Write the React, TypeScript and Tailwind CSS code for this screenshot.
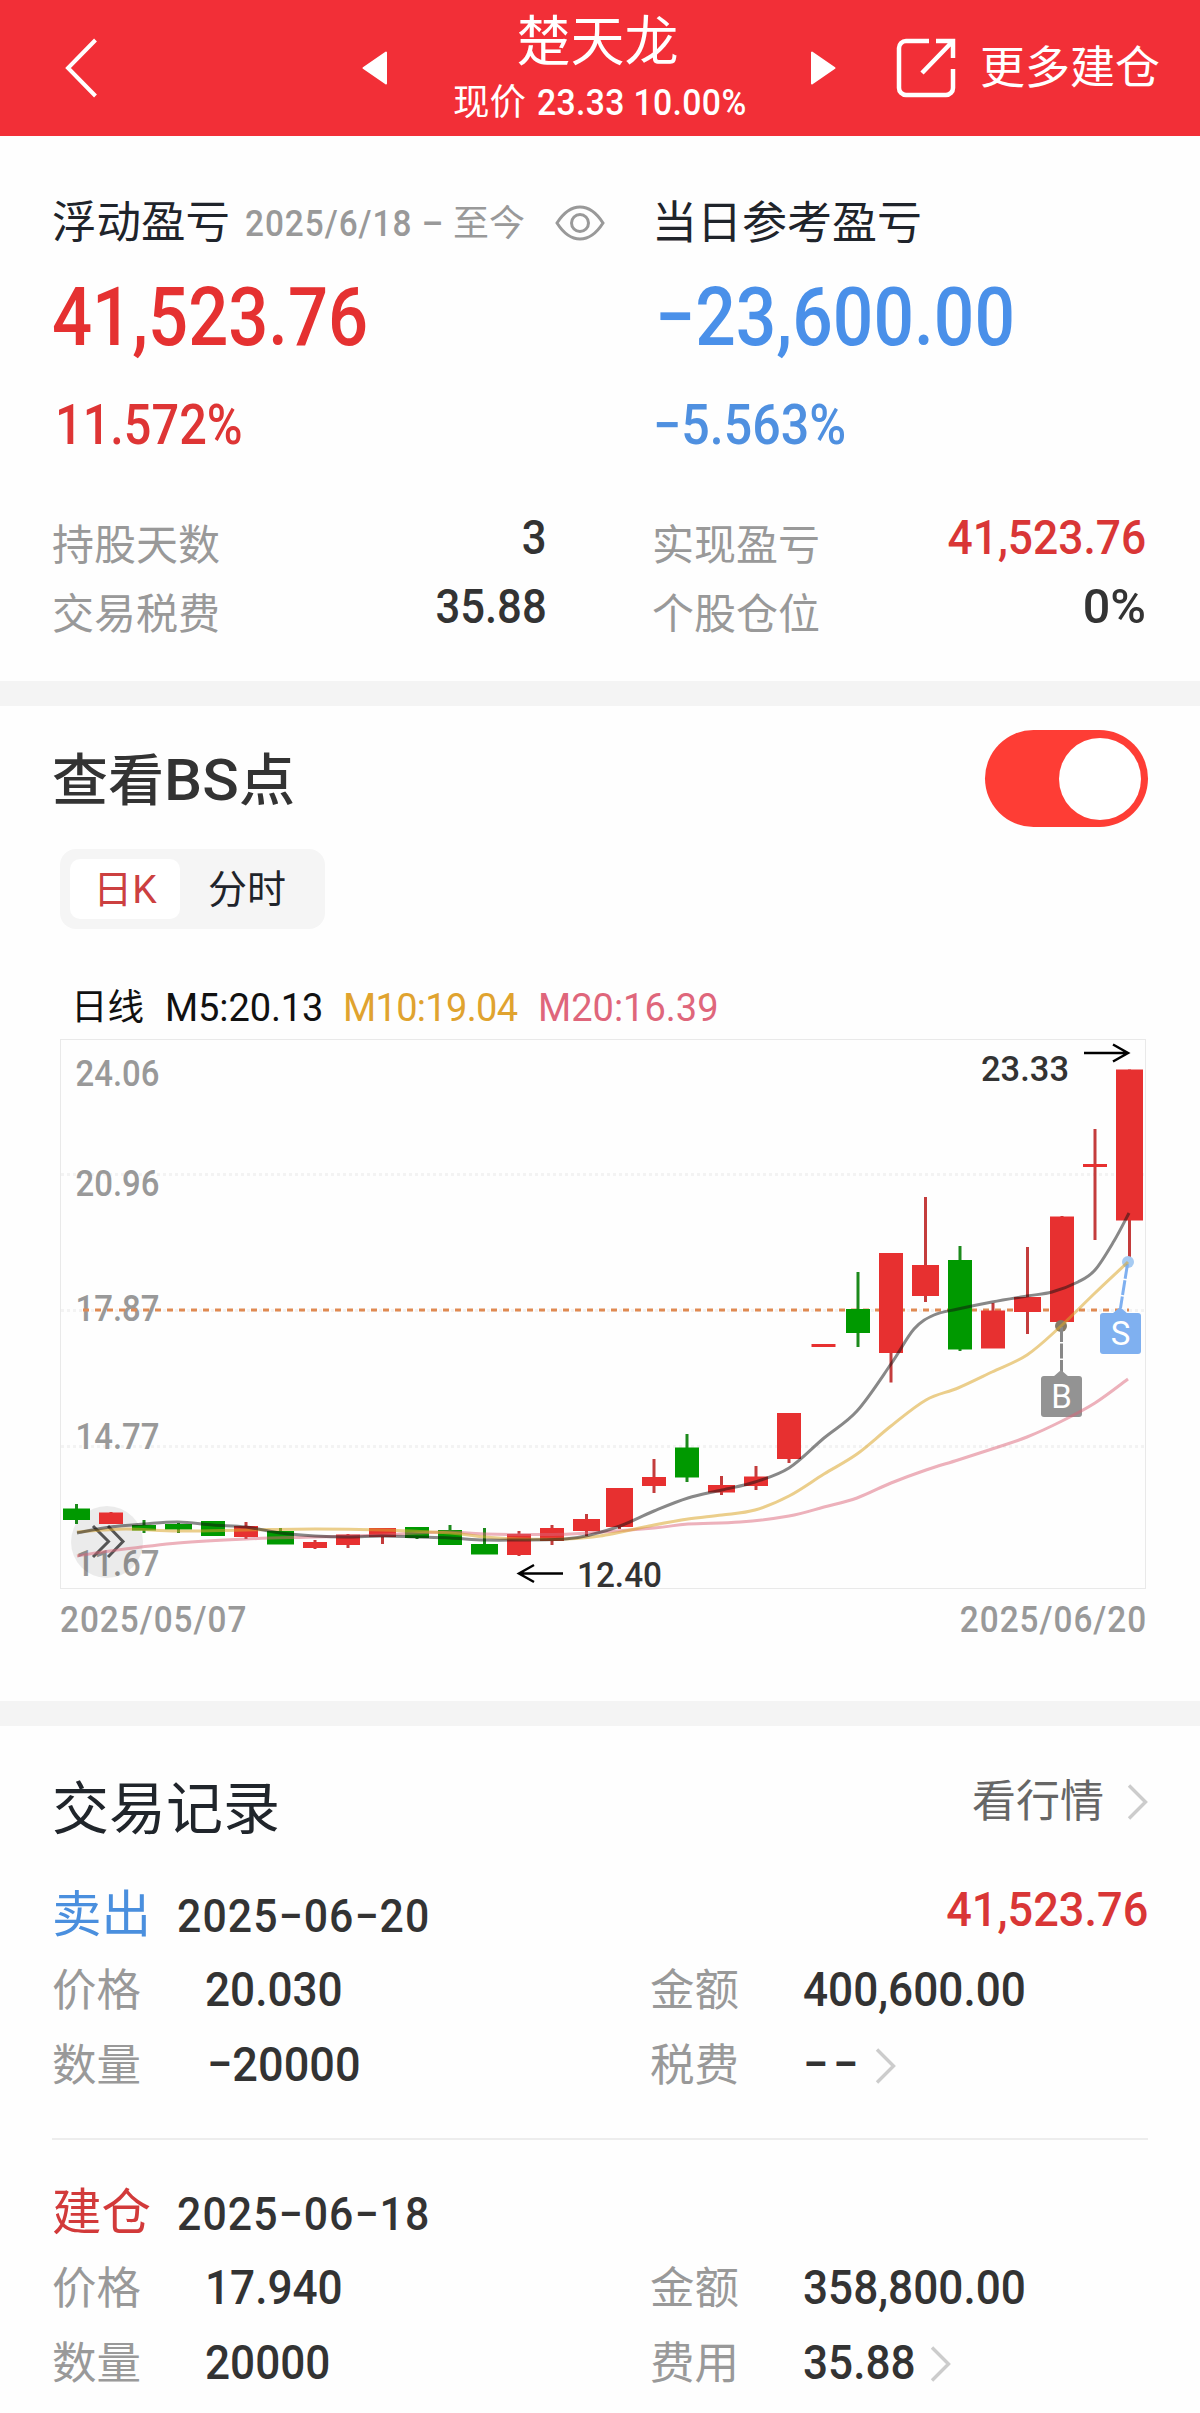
import clsx from "clsx";

const RED = "#e73030";
const GREEN = "#009900";

// left, width, body top, body bottom, high, low, rising
const candles: any[] = [
  [63, 27, 1508.5, 1520, 1504, 1524, false],
  [99, 24, 1512.5, 1524, 1512, 1524, true],
  [132, 24, 1525, 1530.5, 1520, 1533, false],
  [165, 27, 1524, 1529.5, 1523, 1533, false],
  [201, 24, 1521, 1536, 1521, 1536, false],
  [234, 24, 1526, 1537, 1522, 1539, true],
  [267, 27, 1531, 1544.5, 1528, 1544, false],
  [303, 24, 1542, 1548, 1540, 1549, true],
  [336, 24, 1534.5, 1545, 1534, 1548, true],
  [369, 27, 1528, 1537, 1528, 1544, true],
  [405, 24, 1527, 1538, 1527, 1539, false],
  [438, 24, 1530, 1545, 1525, 1545, false],
  [471, 27, 1544, 1554.5, 1528, 1554, false],
  [507, 24, 1534, 1555, 1531, 1556, true],
  [540, 24, 1528, 1541, 1525, 1545, true],
  [573, 27, 1519, 1531, 1514, 1536, true],
  [606, 27, 1488, 1527, 1488, 1529, true],
  [642, 24, 1477, 1486, 1459, 1493, true],
  [675, 24, 1447.5, 1477.5, 1434, 1482, false],
  [708, 27, 1485, 1492.5, 1476, 1495, true],
  [744, 24, 1476.5, 1486, 1466, 1490, true],
  [777, 24, 1413, 1459, 1413, 1463, true],
  [811.5, 24, 1344, 1347, 1344, 1347, true],
  [846, 24, 1309, 1333, 1272, 1347, false],
  [879, 24, 1253, 1353, 1253, 1382.5, true],
  [912, 27, 1265, 1296, 1197, 1302, true],
  [948, 24, 1260, 1349.5, 1246, 1351, false],
  [981, 24, 1310.5, 1348.5, 1303, 1348, true],
  [1014, 27, 1297, 1312, 1247, 1334, true],
  [1050, 24, 1216.5, 1322, 1216, 1326, true],
  [1083, 24, 1164, 1167, 1129, 1240, true],
  [1116, 27, 1069.5, 1220.5, 1069.5, 1260, true],
];

const ma5 = [
  [77, 1533], [110, 1527], [144, 1524], [178, 1522], [213, 1525], [246, 1527], [280, 1533], [315, 1536],
  [348, 1537], [382, 1536], [417, 1537], [450, 1538], [485, 1540], [519, 1540], [565, 1539], [590, 1535],
  [620, 1526], [654, 1511], [688, 1498], [722, 1490], [755, 1482], [789, 1468], [824, 1438], [857, 1411],
  [891, 1364], [914, 1329], [934, 1315], [958, 1309], [992, 1302], [1027, 1296], [1052, 1292], [1078, 1282],
  [1095, 1270], [1114, 1241], [1129, 1213],
];
const ma10 = [
  [77, 1532], [125, 1529], [178, 1531], [246, 1530], [315, 1529], [382, 1530], [450, 1533], [485, 1537],
  [519, 1539], [565, 1539], [600, 1536], [654, 1525], [688, 1519], [722, 1515], [755, 1510], [789, 1496],
  [824, 1474], [857, 1454], [891, 1426], [926, 1400], [958, 1388], [992, 1372], [1027, 1355], [1061, 1326],
  [1095, 1293], [1128, 1262],
];
const ma20 = [
  [77, 1556], [110, 1551], [178, 1543], [246, 1539], [315, 1537], [382, 1535], [417, 1533], [450, 1532],
  [485, 1534], [552, 1534.5], [587, 1533], [654, 1528], [688, 1524], [740, 1522], [789, 1516], [824, 1507],
  [857, 1498], [891, 1483], [926, 1470], [958, 1460], [992, 1449], [1027, 1437], [1062, 1421], [1095, 1403],
  [1128, 1379],
];

const smooth = (pts: number[][]) => {
  let d = `M${pts[0][0]} ${pts[0][1]}`;
  for (let i = 0; i < pts.length - 1; i++) {
    const p0 = pts[i - 1] || pts[i];
    const p1 = pts[i];
    const p2 = pts[i + 1];
    const p3 = pts[i + 2] || p2;
    d += `C${p1[0] + (p2[0] - p0[0]) / 6} ${p1[1] + (p2[1] - p0[1]) / 6} ${p2[0] - (p3[0] - p1[0]) / 6} ${
      p2[1] - (p3[1] - p1[1]) / 6
    } ${p2[0]} ${p2[1]}`;
  }
  return d;
};

const Num = ({ children, className }: any) => (
  <span className={clsx("inline-block whitespace-nowrap font-medium", className)}>{children}</span>
);

const Chevron = ({ className }: any) => (
  <svg viewBox="0 0 21 36" fill="none" className={clsx("h-9 w-[21px] shrink-0", className)}>
    <path d="M2 1.5 18.5 18 2 34.5" stroke="#cccccc" strokeWidth="3.4" />
  </svg>
);

const Header = () => (
  <header className="flex h-[136px] items-center bg-[#f22f37] text-white">
    <svg viewBox="0 0 32 60" fill="none" className="ml-[65px] h-[60px] w-8">
      <path d="M30.5 2 3 30l27.5 28" stroke="#fff" strokeWidth="4" />
    </svg>
    <svg viewBox="0 0 26 34" className="ml-[265px] h-[34px] w-[26px]">
      <path d="M24 1.5v31L1.5 17z" fill="#fff" stroke="#fff" strokeWidth="2" strokeLinejoin="round" />
    </svg>
    <div className="flex w-[422px] flex-col items-center">
      <h1 className="-ml-[3px] h-[70px] text-[54px] leading-[70px]">楚天龙</h1>
      <div className="flex h-[50px] items-center text-[36.5px] leading-[50px]">
        <span>现价</span>
        <Num className="ml-[11px] w-[208px] origin-left scale-x-[.925] tracking-[.01em]">23.33 10.00%</Num>
      </div>
    </div>
    <svg viewBox="0 0 26 34" className="h-[34px] w-[26px]">
      <path d="M2 1.5v31L24.5 17z" fill="#fff" stroke="#fff" strokeWidth="2" strokeLinejoin="round" />
    </svg>
    <svg viewBox="0 0 60 60" fill="none" className="ml-[60px] h-[60px] w-[60px]">
      <path d="M33 3H10a7 7 0 0 0-7 7v40a7 7 0 0 0 7 7h40a7 7 0 0 0 7-7V31" stroke="#fff" strokeWidth="4.5" />
      <path d="M40 3h17v17M57 3 26 35" stroke="#fff" strokeWidth="4.5" />
    </svg>
    <span className="mt-[2px] ml-[24px] whitespace-nowrap text-[45px] leading-[60px]">更多建仓</span>
  </header>
);

const Stat = ({ label, value, className }: any) => (
  <div className="flex h-[69.5px] items-center justify-between">
    <span className="text-[42px] text-[#999]">{label}</span>
    <Num className={clsx("origin-right pb-4 text-[48.5px]", className)}>{value}</Num>
  </div>
);

const Summary = () => (
  <section className="flex h-[545px] gap-[105px] pt-[57px] pl-[52px]">
    <div className="w-[495px]">
      <div className="flex h-[60px] items-center whitespace-nowrap">
        <span className="w-[193px] shrink-0 text-[44.5px] text-[#1f242b]">浮动盈亏</span>
        <span className="w-[284px] shrink-0 text-[37px] text-[#999]">
          <Num className="w-[208px] origin-left scale-x-[.9] tracking-[.03em]">2025/6/18 –</Num>
          <span className="text-[36px]">至今</span>
        </span>
        <svg viewBox="0 0 50 36" fill="none" className="ml-[26px] h-9 w-[50px] shrink-0">
          <path d="M2 18C9 7 16 2 25 2s16 5 23 16c-7 11-14 16-23 16S9 29 2 18z" stroke="#999" strokeWidth="3" />
          <circle cx="25" cy="18" r="8.5" stroke="#999" strokeWidth="3" />
        </svg>
      </div>
      <div className="flex h-[126px] items-center pt-1 text-[81.5px] text-[#e53131]">
        <Num className="origin-left scale-x-[.866]">41,523.76</Num>
      </div>
      <div className="mb-10 flex h-[92px] items-center pl-[3px] text-[55px] text-[#de3535]">
        <Num className="origin-left scale-x-[.885]">11.572%</Num>
      </div>
      <Stat label="持股天数" value="3" className="scale-x-[.9] text-[#333]" />
      <Stat label="交易税费" value="35.88" className="scale-x-[.9] text-[#333]" />
    </div>
    <div className="w-[494px]">
      <div className="flex h-[60px] items-center whitespace-nowrap text-[45px] text-[#1f242b]">当日参考盈亏</div>
      <div className="flex h-[126px] items-center pt-1 pl-[3px] text-[81.5px] text-[#4a90e9]">
        <Num className="origin-left scale-x-[.876]">−23,600.00</Num>
      </div>
      <div className="mb-10 flex h-[92px] items-center pl-px text-[55px] text-[#4f90e0]">
        <Num className="origin-left scale-x-[.912]">−5.563%</Num>
      </div>
      <Stat label="实现盈亏" value="41,523.76" className="scale-x-[.915] text-[#d93636]" />
      <Stat label="个股仓位" value="0%" className="text-[#333]" />
    </div>
  </section>
);

const axis: any[] = [
  ["24.06", 1086],
  ["20.96", 1196],
  ["17.87", 1321],
  ["14.77", 1449],
  ["11.67", 1576],
];

const KChart = () => (
  <svg viewBox="60 1039 1086 550" className="mt-px ml-2 block h-[550px] w-[1086px] overflow-visible" fill="none">
    <rect x="60.5" y="1039.5" width="1085" height="549" stroke="#e9e9e9" />
    {[1174.5, 1310.5, 1446.5].map((y) => (
      <path key={y} d={`M61 ${y}H1145`} stroke="#f3f3f3" strokeWidth="3" strokeDasharray="3 3" />
    ))}
    {axis.map(([label, y]) => (
      <text key={label} x="75.5" y={y} fontSize="37" fontWeight="500" fill="#999" textLength="84" lengthAdjust="spacingAndGlyphs">
        {label}
      </text>
    ))}
    <path d="M83 1310H1129" stroke="#e08a52" strokeWidth="3" strokeDasharray="6 6" />
    <circle cx="107" cy="1542" r="36" fill="#000" fillOpacity=".075" />
    {candles.map(([x, w, top, bottom, high, low, up]) => (
      <g key={x} fill={up ? RED : GREEN}>
        <rect x={x + w / 2 - 1.5} y={high} width="3" height={low - high} fill={up ? "#c43c3c" : "#1c8a1c"} />
        <rect x={x} y={top} width={w} height={bottom - top} />
      </g>
    ))}
    <path d="M93 1526 108.5 1541.5 93 1557M108 1526l15 15.5-15 15.5" stroke="#555" strokeWidth="3" />
    <circle cx="1128" cy="1262" r="6" fill="#a6cbf2" />
    <path d="M1127.5 1264 1120.5 1308" stroke="#7fb0f0" strokeWidth="3" strokeDasharray="15 1.5" />
    <path d="M1112 1314l8-7 8 7z" fill="#7fb0f0" />
    <rect x="1100" y="1313" width="41" height="41" rx="3" fill="#7fb0f0" />
    <text x="1120.5" y="1345" fontSize="33" fill="#fff" textAnchor="middle">S</text>
    <circle cx="1061" cy="1326" r="6" fill="#857a66" />
    <path d="M1061.5 1327V1372" stroke="#888" strokeWidth="3" strokeDasharray="15 1.5" />
    <path d="M1053 1377l8-7 8 7z" fill="#939393" />
    <rect x="1041" y="1376" width="41" height="41" rx="3" fill="#939393" />
    <text x="1061.5" y="1407.5" fontSize="33" fill="#fff" textAnchor="middle">B</text>
    <path d={smooth(ma20)} stroke="#dc6478" strokeOpacity=".5" strokeWidth="3" />
    <path d={smooth(ma10)} stroke="#dba52c" strokeOpacity=".55" strokeWidth="3" />
    <path d={smooth(ma5)} stroke="#111" strokeOpacity=".5" strokeWidth="3" />
    <path d="M563 1573.5H519M534 1565l-15 8.5 15 8.5" stroke="#000" strokeWidth="2.5" />
    <text x="577" y="1587" fontSize="35" fontWeight="500" fill="#333" textLength="85" lengthAdjust="spacingAndGlyphs">12.40</text>
    <path d="M1084 1053h44M1113 1044.500l15 8.500-15 8.500" stroke="#000" strokeWidth="2.5" />
    <text x="981" y="1081" fontSize="35" fontWeight="500" fill="#333" textLength="88" lengthAdjust="spacingAndGlyphs">23.33</text>
  </svg>
);

const ChartSection = () => (
  <section className="h-[995px] px-[52px] pt-6">
    <div className="flex h-[97px] items-center justify-between">
      <h2 className="pt-[3px] text-[56px] font-medium text-[#333]">
        查看<span className="inline-block w-[75px] origin-left scale-x-[1.06] text-[57px]">BS</span>点
      </h2>
      <div className="flex h-[97px] w-[163px] items-center justify-end rounded-full bg-[#fe3d35] pr-[7px]">
        <div className="size-[82px] rounded-full bg-white" />
      </div>
    </div>
    <div className="mt-[22px] ml-2 flex h-20 w-[265px] items-center rounded-2xl bg-[#f5f5f5] pl-2.5 text-[39px]">
      <div className="flex h-[60px] w-[110px] items-center justify-center rounded-[10px] bg-white pt-0.5 text-[#cc4040]">
        日K
      </div>
      <div className="ml-7 pt-0.5 text-[#1f242b]">分时</div>
    </div>
    <div className="mt-[49px] flex h-[60px] items-center pl-[19px] text-[38px] whitespace-nowrap text-[#111]">
      <span className="w-[94px] text-[36.5px]">日线</span>
      <span className="w-[178px] tracking-[-.003em]">M5:20.13</span>
      <span className="w-[195px] tracking-[-.018em] text-[#e0a32f]">M10:19.04</span>
      <span className="text-[#df667b]">M20:16.39</span>
    </div>
    <KChart />
    <div className="flex h-[60px] items-center justify-between pr-px pl-2 text-[37px] text-[#999]">
      <Num className="origin-left scale-x-[.9] tracking-[.03em]">2025/05/07</Num>
      <Num className="origin-right scale-x-[.9] tracking-[.03em]">2025/06/20</Num>
    </div>
  </section>
);

const Field = ({ label, value, more, className = "scale-x-[.91]" }: any) => (
  <div className="flex h-[75px] items-center">
    <span className="w-[153px] shrink-0 pt-0.5 text-[44.5px] text-[#999]">{label}</span>
    <Num className={clsx("origin-left text-[48.5px] text-[#333]", className)}>{value}</Num>
    {more && <Chevron className="ml-[3px]" />}
  </div>
);

const Trade = ({ type, date, amount, buy, fields }: any) => (
  <div>
    <div className="flex h-[74px] items-center">
      <span className={clsx("w-[125px] text-[49.5px]", buy ? "text-[#d23a3a]" : "text-[#4a8fde]")}>{type}</span>
      <Num className="origin-left scale-x-[.93] text-[46px] tracking-[.025em] text-[#333]">{date}</Num>
      {amount && (
        <Num className="ml-auto origin-right scale-x-[.93] pb-3 text-[48.5px] text-[#d93636]">{amount}</Num>
      )}
    </div>
    <div className="grid grid-cols-[598px_1fr]">
      {fields.map((f: any) => (
        <Field key={f.label} {...f} />
      ))}
    </div>
  </div>
);

const Records = () => (
  <section className="px-[52px] pt-[53px]">
    <div className="flex h-[60px] items-center justify-between">
      <h2 className="text-[57px] text-[#20252b]">交易记录</h2>
      <div className="flex items-center pb-3.5 text-[44px] text-[#666]">
        看行情
        <Chevron className="ml-[23px]" />
      </div>
    </div>
    <div className="mt-10">
      <Trade
        type="卖出"
        date="2025−06−20"
        amount="41,523.76"
        fields={[
          { label: "价格", value: "20.030" },
          { label: "金额", value: "400,600.00" },
          { label: "数量", value: "−20000", className: "ml-[2px] scale-x-[.93]" },
          { label: "税费", value: "−−", more: true, className: "w-[69px] tracking-[.1em] scale-x-[.93]" },
        ]}
      />
    </div>
    <div className="mt-[35px] mb-[37px] h-0.5 bg-[#ededed]" />
    <Trade
      type="建仓"
      date="2025−06−18"
      buy
      fields={[
        { label: "价格", value: "17.940" },
        { label: "金额", value: "358,800.00" },
        { label: "数量", value: "20000" },
        { label: "费用", value: "35.88", more: true },
      ]}
    />
  </section>
);

const App = () => (
  <main className="h-[2413px] w-[1200px] overflow-hidden bg-[#fefefe] font-['Roboto','Noto_Sans_CJK_SC',sans-serif] leading-none">
    <Header />
    <Summary />
    <div className="h-[25px] bg-[#f4f4f4]" />
    <ChartSection />
    <div className="h-[25px] bg-[#f4f4f4]" />
    <Records />
  </main>
);

export default App;
